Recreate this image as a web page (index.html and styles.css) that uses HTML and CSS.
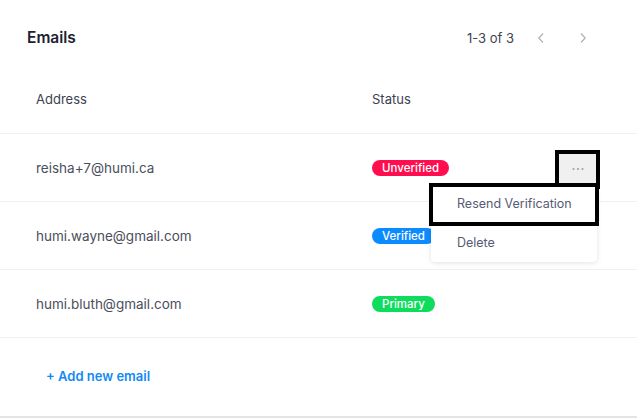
FILE: index.html
```html
<!DOCTYPE html>
<html>
<head>
<meta charset="utf-8">
<link rel="stylesheet" href="styles.css">
</head>
<body>
<section class="card">
  <header class="card-head">
    <h2 class="title">Emails</h2>
    <div class="pager">
      <span class="pager-count">1-3 of 3</span>
      <button class="pager-btn" aria-label="Previous">
        <svg width="8" height="12" viewBox="0 0 8 12"><path d="M6 1.5 L1.8 6 L6 10.5" fill="none" stroke="currentColor" stroke-width="1.2"/></svg>
      </button>
      <button class="pager-btn" aria-label="Next">
        <svg width="8" height="12" viewBox="0 0 8 12"><path d="M2 1.5 L6.2 6 L2 10.5" fill="none" stroke="currentColor" stroke-width="1.2"/></svg>
      </button>
    </div>
  </header>

  <div class="table">
    <div class="row row-head">
      <div class="cell">Address</div>
      <div class="cell">Status</div>
      <div class="cell"></div>
    </div>
    <div class="row">
      <div class="cell addr">reisha+7@humi.ca</div>
      <div class="cell"><span class="badge badge-red">Unverified</span></div>
      <div class="cell actions">
        <button class="more-btn" aria-label="More">
          <svg width="12" height="4" viewBox="0 0 12 4"><circle cx="1.5" cy="2" r="1.1"/><circle cx="6" cy="2" r="1.1"/><circle cx="10.5" cy="2" r="1.1"/></svg>
        </button>
        <div class="menu">
          <div class="menu-item focused">Resend Verification</div>
          <div class="menu-item">Delete</div>
        </div>
      </div>
    </div>
    <div class="row">
      <div class="cell addr">humi.wayne@gmail.com</div>
      <div class="cell"><span class="badge badge-blue">Verified</span></div>
      <div class="cell actions"></div>
    </div>
    <div class="row">
      <div class="cell addr">humi.bluth@gmail.com</div>
      <div class="cell"><span class="badge badge-green">Primary</span></div>
      <div class="cell actions"></div>
    </div>
  </div>

  <div class="add-row">
    <a class="add-link" href="#">+ Add new email</a>
  </div>
</section>
</body>
</html>
```

FILE: styles.css
```css
* { box-sizing: border-box; }
html, body { margin: 0; padding: 0; background: #fff; }
body {
  font-family: Inter, "Noto Sans", "Liberation Sans", sans-serif;
  color: #454a57;
  width: 637px;
  height: 418px;
  overflow: hidden;
}
.card {
  height: 418px;
  border-bottom: 2px solid #e3e4e8;
  display: flex;
  flex-direction: column;
}
.card-head {
  height: 64px;
  padding: 28px 46px 0 27px;
  display: flex;
  justify-content: space-between;
  align-items: flex-start;
}
.title {
  margin: 0;
  font-size: 15.5px;
  line-height: 20px;
  font-weight: 600;
  color: #1e2230;
}
.pager {
  display: flex;
  align-items: center;
  height: 20px;
}
.pager-count {
  font-size: 13px;
  color: #3d4250;
  margin-right: 13px;
}
.pager-btn {
  border: 0;
  background: transparent;
  color: #aeb2bb;
  width: 42px;
  height: 20px;
  padding: 0 0 0 10px;
  display: flex;
  align-items: center;
  justify-content: flex-start;
}
.pager-btn + .pager-btn { width: 22px; }
.row {
  display: grid;
  grid-template-columns: 336px 1fr auto;
  align-items: center;
  padding: 0 41px 0 36px;
  height: 68px;
  border-bottom: 1px solid #eff0f3;
}
.row-head {
  height: 70px;
  font-size: 13px;
  color: #3d4250;
}
.cell { font-size: 13px; }
.addr { color: #4a4f5c; font-size: 13.5px; }
.badge {
  display: inline-block;
  height: 16px;
  line-height: 16px;
  padding: 0 10px;
  border-radius: 8px;
  color: #fff;
  font-size: 11.5px;
  font-weight: 500;
}
.badge-red { background: #ff0d4f; }
.badge-blue { background: #0c8bff; }
.badge-green { background: #0ddc5c; }
.actions {
  position: relative;
  width: 37px;
  height: 30px;
}
.more-btn {
  width: 37px;
  height: 31px;
  margin-top: 1px;
  border: 0;
  background: #f0f0f1;
  outline: 4px solid #000;
  color: #9aa0ac;
  fill: #9aa0ac;
  padding: 0;
  display: flex;
  align-items: center;
  justify-content: center;
}
.menu {
  position: absolute;
  top: 32px;
  right: -1px;
  width: 166px;
  background: #fff;
  border-radius: 4px;
  box-shadow: 0 1px 5px rgba(20, 30, 50, 0.13);
  z-index: 2;
}
.menu-item {
  height: 38px;
  line-height: 38px;
  padding-left: 26px;
  font-size: 12.5px;
  color: #555b75;
}
.menu-item.focused {
  height: 39px;
  outline: 4px solid #000;
  outline-offset: -2px;
}
.add-row {
  flex: 1;
  display: flex;
  align-items: center;
  padding-left: 46px;
  padding-bottom: 2px;
}
.add-link {
  font-size: 13px;
  font-weight: 600;
  color: #1289f5;
  text-decoration: none;
}
```
